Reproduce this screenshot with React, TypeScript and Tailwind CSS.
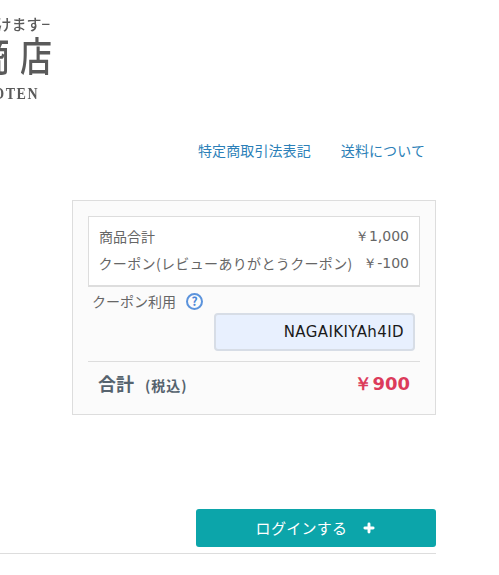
import { Plus } from "lucide-react";

const jp = "font-['Noto_Sans_CJK_JP','Noto_Sans',sans-serif]";
const num = "font-['DejaVu_Sans',sans-serif]";

const App = () => {
  return (
    <div className={`w-[499px] h-[575px] overflow-hidden bg-white ${jp}`}>
      <div className="w-[436px]">
        {/* Logo, cut off by the left edge */}
        <div className="w-[52px] h-[141px] pt-[14px] text-[#5a5a5a] blur-[0.4px]">
          <div className="flex justify-end whitespace-nowrap text-[15px] leading-[20px] font-medium pr-[2px]">けます−</div>
          <div className="flex justify-end gap-[10px] whitespace-nowrap text-[32px] leading-[40px] -mt-[6px] font-medium scale-y-125 origin-top">
            <span>商</span>
            <span>店</span>
          </div>
          <div className="flex justify-end whitespace-nowrap font-['Liberation_Serif',serif] font-bold text-[14px] leading-[18px] tracking-[1.5px] mt-[17px] pr-[13px] scale-y-125">
            OTEN
          </div>
        </div>

        {/* Links */}
        <div className="flex justify-end gap-[30px] pr-[11px] text-[14px] leading-[18px] tracking-[0.1px] text-[#2b7fb8]">
          <span>特定商取引法表記</span>
          <span>送料について</span>
        </div>

        {/* Order summary */}
        <div className="ml-[72px] mt-[41px] h-[215px] border border-[#dddddd] bg-[#fbfbfb] px-[15px] pt-[15px]">
          <div className="h-[71px] border border-[#dddddd] border-b-2 bg-white px-[10px] pt-[6px] text-[14px] text-[#666666]">
            <div className="flex justify-between leading-[27px]">
              <span>商品合計</span>
              <span className={`${num} text-[14px]`}>￥1,000</span>
            </div>
            <div className="flex justify-between leading-[27px]">
              <span className="whitespace-nowrap tracking-[0.35px] -ml-[0.5px]">クーポン(レビューありがとうクーポン)</span>
              <span className={`${num} text-[14px]`}>￥-100</span>
            </div>
          </div>

          <div className="flex items-center gap-[10px] pl-[4px] mt-[4px] h-[20px] text-[14px] text-[#666666]">
            <span>クーポン利用</span>
            <span className="flex items-center justify-center w-[17px] h-[17px] rounded-full border-2 border-[#5b93dc] text-[12px] leading-none font-bold text-[#4a86d8]">
              ?
            </span>
          </div>

          <div className="flex justify-end mt-[2px] pr-[5px]">
            <div className={`w-[201px] h-[38px] flex items-center justify-end pr-[9px] rounded-[4px] border-2 border-[#d7dde6] bg-[#e8f0fe] ${num} text-[15px] tracking-[0.4px] text-[#1a1a1a]`}>
              NAGAIKIYAh4ID
            </div>
          </div>

          <div className="flex items-center justify-between mt-[10px] h-[44px] border-t border-[#dddddd] px-[10px]">
            <div className="flex items-baseline gap-[11px] font-bold text-[#56636e]">
              <span className="text-[18px]">合計</span>
              <span className="text-[14px] tracking-[1px]">(税込)</span>
            </div>
            <span className={`${num} font-bold text-[18px] text-[#dc3b5b]`}>￥900</span>
          </div>
        </div>

        {/* Login */}
        <div className="flex justify-end mt-[94px]">
          <button className="w-[240px] h-[38px] flex items-center justify-center gap-[15px] rounded-[3px] bg-[#0ca5aa] text-[15px] tracking-[0.3px] text-white">
            ログインする
            <Plus size={14} strokeWidth={5} />
          </button>
        </div>
        <div className="mt-[6px] border-t border-[#dddddd]" />
      </div>
    </div>
  );
};

export default App;
